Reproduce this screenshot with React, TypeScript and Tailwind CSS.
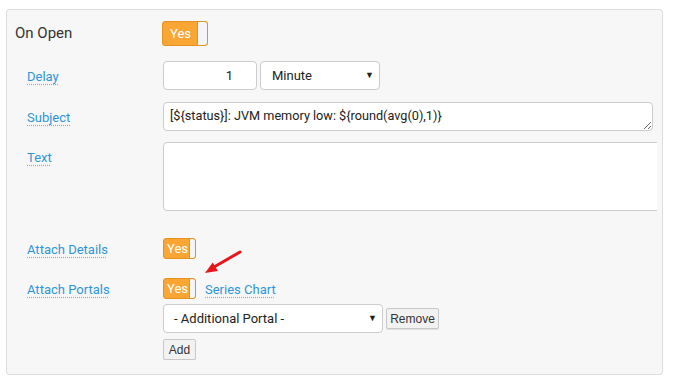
import { useState } from 'react';

// --- Interruptor naranja ---
function Toggle({ big = false }: { big?: boolean }) {
  return (
    <div
      className={
        big
          ? 'flex h-[25px] w-[46px] shrink-0 rounded-[3px] border border-[#e3921f] bg-[#f9a634] overflow-hidden'
          : 'flex h-[21px] w-[33px] shrink-0 rounded-[3px] border border-[#e3921f] bg-[#f9a634] overflow-hidden'
      }
    >
      <span
        className={
          big
            ? 'flex-1 flex items-center justify-center text-[13px] text-white pl-[1px]'
            : 'flex-1 flex items-center justify-center text-[13px] text-white pl-[2px]'
        }
      >
        Yes
      </span>
      <span
        className={
          big
            ? 'w-[10px] bg-[#f5f5f5] border-l border-[#e3921f] rounded-r-[2px]'
            : 'w-[6px] bg-[#f5f5f5] border-l border-[#e3921f] rounded-r-[2px]'
        }
      />
    </div>
  );
}

function Etiqueta({ texto }: { texto: string }) {
  return (
    <span className="text-[13px] text-[#2d96db] underline decoration-dotted decoration-[#8fb3cc] underline-offset-[3px]">
      {texto}
    </span>
  );
}

export default function App() {
  const [asunto] = useState('[${status}]: JVM memory low: ${round(avg(0),1)}');

  return (
    <div className="relative w-[673px] h-[387px] bg-white font-['Roboto',sans-serif] text-[#333]">
      <div className="absolute left-[6px] top-[9px] w-[657px] h-[366px] rounded-[3px] border border-[#dddddd] bg-[#f7f7f7]" />

      <div className="relative ml-[7px] pt-[21px] pl-[8px] mr-[16px] overflow-hidden flex flex-col">
        {/* On Open */}
        <div className="flex items-center h-[25px]">
          <span className="w-[147px] shrink-0 text-[15px] text-[#333] pb-[1px]">On Open</span>
          <Toggle big />
        </div>

        {/* Delay */}
        <div className="flex items-center h-[29px] mt-[15px] pl-[12px]">
          <div className="w-[136px] shrink-0">
            <Etiqueta texto="Delay" />
          </div>
          <div className="h-[29px] w-[94px] shrink-0 rounded-[4px] border border-[#cccccc] bg-white flex items-center justify-end pr-[23px] text-[13px] text-[#222]">
            1
          </div>
          <div className="ml-[3px] h-[29px] w-[120px] shrink-0 rounded-[4px] border border-[#cccccc] bg-white flex items-center justify-between pl-[11px] pr-[5px] text-[13px] text-[#222]">
            <span>Minute</span>
            <span className="text-[9px]">▼</span>
          </div>
        </div>

        {/* Subject */}
        <div className="flex items-center h-[29px] mt-[12px] pl-[12px]">
          <div className="w-[136px] shrink-0">
            <Etiqueta texto="Subject" />
          </div>
          <textarea
            readOnly
            value={asunto}
            className="h-[29px] w-[490px] shrink-0 rounded-[4px] border border-[#cccccc] bg-white px-[6px] pt-[5px] text-[12.7px] leading-[16px] text-[#222] resize-y overflow-hidden outline-none"
          />
        </div>

        {/* Text */}
        <div className="flex items-start mt-[11px] pl-[12px]">
          <div className="w-[136px] shrink-0 pt-[3px]">
            <Etiqueta texto="Text" />
          </div>
          <div className="h-[69px] w-[560px] shrink-0 rounded-[4px] border border-[#cccccc] bg-white" />
        </div>

        {/* Attach Details */}
        <div className="flex items-center h-[21px] mt-[27px] pl-[12px]">
          <div className="w-[136px] shrink-0">
            <Etiqueta texto="Attach Details" />
          </div>
          <Toggle />
        </div>

        {/* Attach Portals */}
        <div className="flex items-center h-[21px] mt-[19px] pl-[12px]">
          <div className="w-[136px] shrink-0">
            <Etiqueta texto="Attach Portals" />
          </div>
          <Toggle />
          <span className="ml-[9px]">
            <Etiqueta texto="Series Chart" />
          </span>
        </div>

        <div className="flex items-center h-[29px] mt-[5px] pl-[148px]">
          <div className="h-[29px] w-[220px] shrink-0 rounded-[4px] border border-[#cccccc] bg-white flex items-center justify-between pl-[10px] pr-[5px] text-[13px] text-[#222]">
            <span>- Additional Portal -</span>
            <span className="text-[9px]">▼</span>
          </div>
          <button className="ml-[3px] h-[21px] w-[53px] rounded-[2px] border border-[#c8c8c8] bg-[#f2f2f2] font-['Liberation_Sans',sans-serif] text-[12px] text-[#333] shadow-[0_1px_0_#e0e0e0]">
            Remove
          </button>
        </div>

        <div className="flex mt-[6px] pl-[148px]">
          <button className="h-[21px] w-[33px] rounded-[2px] border border-[#c8c8c8] bg-[#f2f2f2] font-['Liberation_Sans',sans-serif] text-[12px] text-[#333] shadow-[0_1px_0_#e0e0e0]">
            Add
          </button>
        </div>
      </div>

      {/* flecha roja */}
      <svg className="absolute left-[200px] top-[248px]" width="46" height="30" viewBox="0 0 46 30">
        <line x1="40" y1="4" x2="14" y2="19" stroke="#e8161b" strokeWidth="3" strokeLinecap="round" />
        <polygon points="5,25 12.7,14.5 17.9,23.1" fill="#e8161b" />
      </svg>
    </div>
  );
}
